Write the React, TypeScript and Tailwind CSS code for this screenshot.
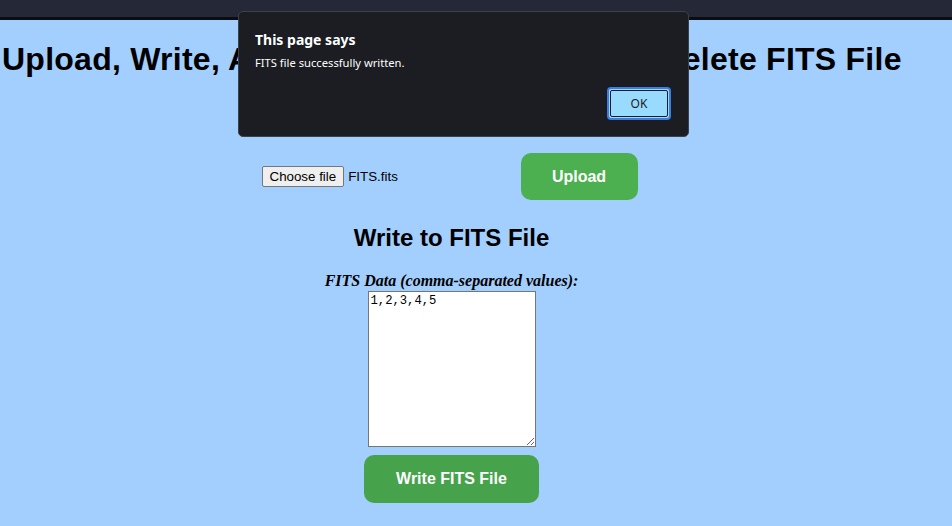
import React from 'react'

export default function App() {
  return (
    <div className="relative w-[952px] h-[526px] overflow-hidden bg-[#a3cffe] font-['Liberation_Sans',Arial,sans-serif] text-black">
      {/* browser top strip */}
      <div className="h-[17px] bg-[#252836]" />
      <div className="h-[3px] bg-[#0b0c12]" />

      <div className="ml-[2px] w-[899px] flex flex-col items-center">
        <h1 className="w-full text-left whitespace-nowrap text-[32px] font-bold leading-[37px] mt-[21px] tracking-[0.25px]">
          Upload, Write, Append, Read, Update, and Delete FITS File
        </h1>

        <div className="flex items-center mt-[75px] mr-[4px]">
          <div className="w-[259px] flex items-center text-[13.33px]">
            <button className="h-[21px] px-[7px] bg-[#efefef] border border-[#767676] rounded-[2px] text-[13.33px] leading-none">
              Choose file
            </button>
            <span className="ml-[4px]">FITS.fits</span>
          </div>
          <button className="w-[117px] h-[47px] rounded-[10px] bg-[#4caf50] text-white text-[16px] font-bold">
            Upload
          </button>
        </div>

        <h2 className="text-[24px] font-bold leading-[28px] mt-[24px]">Write to FITS File</h2>

        <label className="mt-[20px] font-['Liberation_Serif','Times_New_Roman',serif] italic font-bold text-[16px] leading-[18px]">
          FITS Data (comma-separated values):
        </label>
        <textarea
          defaultValue="1,2,3,4,5"
          className="mt-[1px] w-[168px] h-[156px] bg-white border border-[#767676] p-[2px] font-['Liberation_Mono','Courier_New',monospace] text-[12.2px] leading-[15px] resize"
        />
        <button className="mt-[8px] w-[175px] h-[48px] rounded-[10px] bg-[#47a24c] text-white text-[16px] font-bold">
          Write FITS File
        </button>
      </div>

      {/* alert dialog */}
      <div className="absolute left-[238px] top-[11px] w-[451px] h-[126px] bg-[#1b1d22] border border-[#3f4046] rounded-[5px] font-['Noto_Sans',sans-serif] text-white">
        <div className="pl-[16px] pt-[19px] text-[14px] font-bold leading-[18px]">This page says</div>
        <div className="pl-[16px] pt-[6px] text-[11.2px] leading-[16px]">FITS file successfully written.</div>
        <div className="absolute right-[17px] bottom-[16px] w-[64px] h-[33px] rounded-[4px] border-2 border-[#3e7ee0] bg-[#99dbff] flex items-center justify-center">
          <div className="w-[58px] h-[27px] border border-[#1b1d22] rounded-[2px] flex items-center justify-center text-[12px] text-[#1b1d22]">
            OK
          </div>
        </div>
      </div>
    </div>
  )
}
